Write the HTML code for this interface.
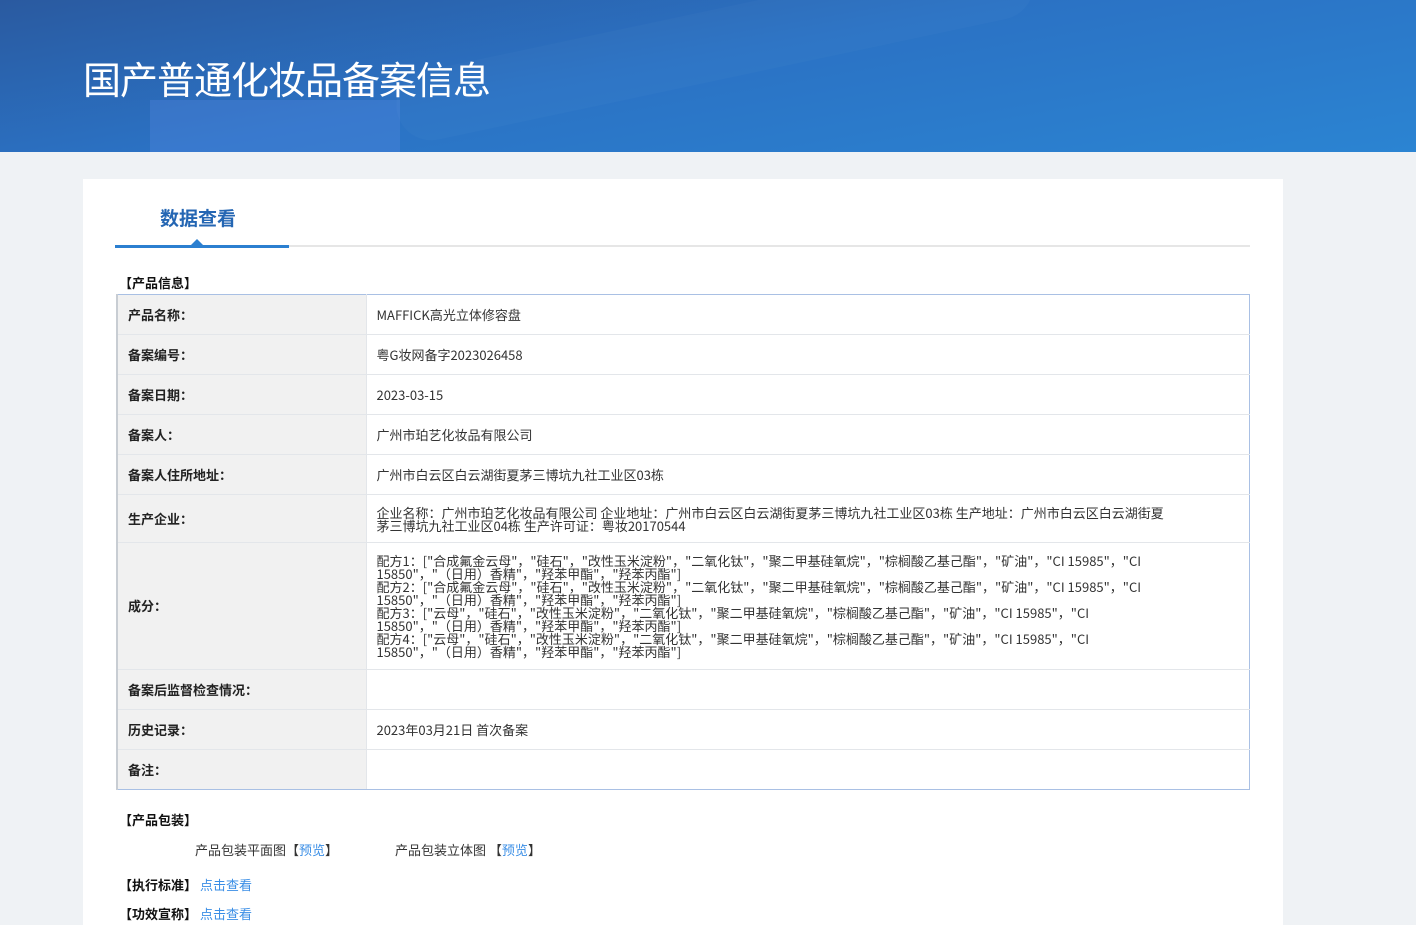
<!DOCTYPE html>
<html><head><meta charset="utf-8"><style>
*{margin:0;padding:0;box-sizing:border-box}
html,body{width:1416px;height:925px;overflow:hidden}
body{background:#eff2f5;font-family:"Noto Sans CJK SC","Liberation Sans",sans-serif;font-size:13px;color:#333;position:relative}
.hd{position:absolute;left:0;top:0;width:1416px;height:152px;background:linear-gradient(170deg,#2a5aa0 0%,#2b72c4 45%,#2b84d2 100%);overflow:hidden}
.hd .b1{position:absolute;left:150px;top:100px;width:250px;height:55px;background:rgba(90,140,230,.3)}
.hd .b2{position:absolute;left:390px;top:10px;width:650px;height:70px;border-radius:40px;background:rgba(255,255,255,.025);transform:rotate(-12deg)}
.hd h1{position:absolute;left:83px;top:55px;font-size:38px;font-weight:normal;color:#fff;letter-spacing:-1px;line-height:46px}
.card{position:absolute;left:83px;top:179px;width:1200px;height:760px;background:#fff}
.tab{position:absolute;left:77px;top:25px;font-size:19px;font-weight:bold;color:#2466b3;line-height:28px}
.ln{position:absolute;left:32px;top:66px;width:1135px;height:2px;background:#e6e6e6}
.ln2{position:absolute;left:32px;top:66px;width:174px;height:3px;background:#2b7fd0}
.tri{position:absolute;left:107px;top:60px;width:0;height:0;border-left:7px solid transparent;border-right:7px solid transparent;border-bottom:7px solid #2b7fd0}
.sec{position:absolute;left:36px;font-weight:bold;color:#111;line-height:18px}
.t{position:absolute;line-height:18px}
table{position:absolute;left:116px;top:294px;width:1134px;border-collapse:collapse;border:1px solid #a9c0e4;border-left:2px solid #c8cdd3}
td{border-bottom:1px solid #e3e6ea;height:40px;vertical-align:middle;color:#333;line-height:18px}
td.l{width:249px;background:#f1f1f1;font-weight:bold;padding-left:10px;border-right:1px solid #e3e6ea;color:#222}
td.v{padding-left:10px}
td.m{line-height:13px}
tr:last-child td{border-bottom:1px solid #a9c0e4}
.a{color:#3a8ee6}
</style></head><body>
<div class="hd"><div class="b1"></div><div class="b2"></div><h1>国产普通化妆品备案信息</h1></div>
<div class="card">
<div class="tab">数据查看</div>
<div class="ln"></div><div class="ln2"></div><div class="tri"></div>
<div class="sec" style="top:95px">【产品信息】</div>
<div class="sec" style="top:632px">【产品包装】</div>
<div class="t" style="left:112px;top:662px">产品包装平面图【<span class="a">预览</span>】</div>
<div class="t" style="left:312px;top:662px">产品包装立体图 【<span class="a">预览</span>】</div>
<div class="t" style="left:36px;top:697px"><b style="color:#111">【执行标准】</b> <span class="a">点击查看</span></div>
<div class="t" style="left:36px;top:726px"><b style="color:#111">【功效宣称】</b> <span class="a">点击查看</span></div>
</div>
<table>
<tr><td class="l">产品名称：</td><td class="v">MAFFICK高光立体修容盘</td></tr>
<tr><td class="l">备案编号：</td><td class="v">粤G妆网备字2023026458</td></tr>
<tr><td class="l">备案日期：</td><td class="v">2023-03-15</td></tr>
<tr><td class="l">备案人：</td><td class="v">广州市珀艺化妆品有限公司</td></tr>
<tr><td class="l">备案人住所地址：</td><td class="v">广州市白云区白云湖街夏茅三博坑九社工业区03栋</td></tr>
<tr><td class="l" style="height:48px">生产企业：</td><td class="v m">企业名称：广州市珀艺化妆品有限公司 企业地址：广州市白云区白云湖街夏茅三博坑九社工业区03栋 生产地址：广州市白云区白云湖街夏<br>茅三博坑九社工业区04栋 生产许可证：粤妆20170544</td></tr>
<tr><td class="l" style="height:127px">成分：</td><td class="v m">配方1：["合成氟金云母"，"硅石"，"改性玉米淀粉"，"二氧化钛"，"聚二甲基硅氧烷"，"棕榈酸乙基己酯"，"矿油"，"CI 15985"，"CI<br>15850"，"（日用）香精"，"羟苯甲酯"，"羟苯丙酯"]<br>配方2：["合成氟金云母"，"硅石"，"改性玉米淀粉"，"二氧化钛"，"聚二甲基硅氧烷"，"棕榈酸乙基己酯"，"矿油"，"CI 15985"，"CI<br>15850"，"（日用）香精"，"羟苯甲酯"，"羟苯丙酯"]<br>配方3：["云母"，"硅石"，"改性玉米淀粉"，"二氧化钛"，"聚二甲基硅氧烷"，"棕榈酸乙基己酯"，"矿油"，"CI 15985"，"CI<br>15850"，"（日用）香精"，"羟苯甲酯"，"羟苯丙酯"]<br>配方4：["云母"，"硅石"，"改性玉米淀粉"，"二氧化钛"，"聚二甲基硅氧烷"，"棕榈酸乙基己酯"，"矿油"，"CI 15985"，"CI<br>15850"，"（日用）香精"，"羟苯甲酯"，"羟苯丙酯"]</td></tr>
<tr><td class="l">备案后监督检查情况：</td><td class="v"></td></tr>
<tr><td class="l">历史记录：</td><td class="v">2023年03月21日 首次备案</td></tr>
<tr><td class="l">备注：</td><td class="v"></td></tr>
</table>
</body></html>
